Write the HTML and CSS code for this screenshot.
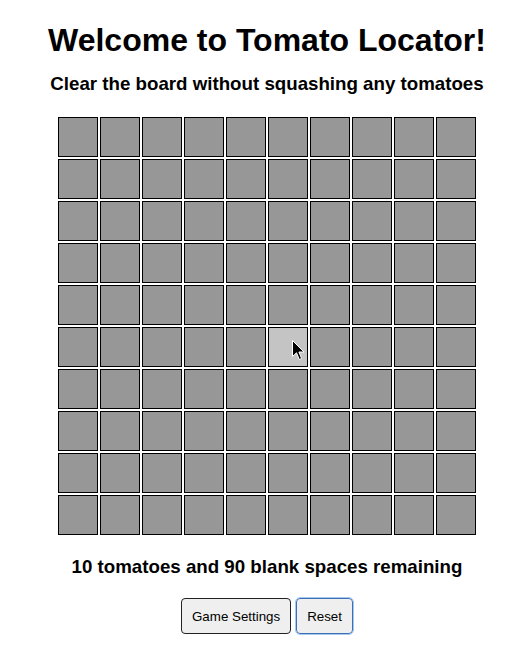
FILE: index.html
```html
<!DOCTYPE html>
<html>
<head>
<meta charset="utf-8">
<link rel="stylesheet" href="styles.css">
</head>
<body>
<main class="app">
  <h1 class="title">Welcome to Tomato Locator!</h1>
  <h3 class="subtitle">Clear the board without squashing any tomatoes</h3>
  <div class="board" id="board"></div>
  <h3 class="status">10 tomatoes and 90 blank spaces remaining</h3>
  <div class="controls">
    <button class="btn">Game Settings</button>
    <button class="btn btn-focus">Reset</button>
  </div>
</main>
<script>
  var board = document.getElementById('board');
  for (var r = 0; r < 10; r++) {
    for (var c = 0; c < 10; c++) {
      var d = document.createElement('div');
      d.className = 'cell';
      if (r === 5 && c === 5) {
        d.className = 'cell cell-hover';
        d.innerHTML = '<svg class="cursor" width="13" height="21" viewBox="0 0 13 21"><path d="M0.5 0.5 L0.5 16.5 L4.5 12.8 L7.3 19.5 L9.6 18.5 L6.9 12 L12 12 Z" fill="#000" stroke="#fff" stroke-width="1"/></svg>';
      }
      board.appendChild(d);
    }
  }
</script>
</body>
</html>
```
FILE: styles.css
```css
html, body {
  margin: 0;
  padding: 0;
  background: #fff;
}
body {
  font-family: "Liberation Sans", Arial, sans-serif;
  color: #000;
}
.app {
  display: flex;
  flex-direction: column;
  align-items: center;
  padding: 8px 8px 8px 14px;
}
.title {
  font-size: 32px;
  font-weight: bold;
  margin: 14px 0 0 0;
  line-height: 37px;
}
.subtitle {
  font-size: 18.72px;
  font-weight: bold;
  margin: 14px 0 0 0;
  line-height: 22px;
}
.board {
  display: grid;
  grid-template-columns: repeat(10, 40px);
  grid-auto-rows: 40px;
  gap: 2px;
  margin-top: 22px;
}
.cell {
  box-sizing: border-box;
  border: 1px solid #000;
  background: #979797;
  position: relative;
}
.cell-hover {
  background: #c4c4c4;
}
.cursor {
  position: absolute;
  left: 23px;
  top: 12px;
}
.status {
  font-size: 18.72px;
  font-weight: bold;
  margin: 21px 0 0 0;
  line-height: 22px;
}
.controls {
  display: flex;
  gap: 5px;
  margin-top: 20px;
}
.btn {
  font-family: "Liberation Sans", Arial, sans-serif;
  font-size: 13.33px;
  height: 36px;
  padding: 0 10px;
  background: #efefef;
  border: 1px solid #222;
  border-radius: 4px;
  color: #000;
}
.btn-focus {
  border-color: #3b6fb6;
  outline: 1px solid #a8c8f0;
}
```
